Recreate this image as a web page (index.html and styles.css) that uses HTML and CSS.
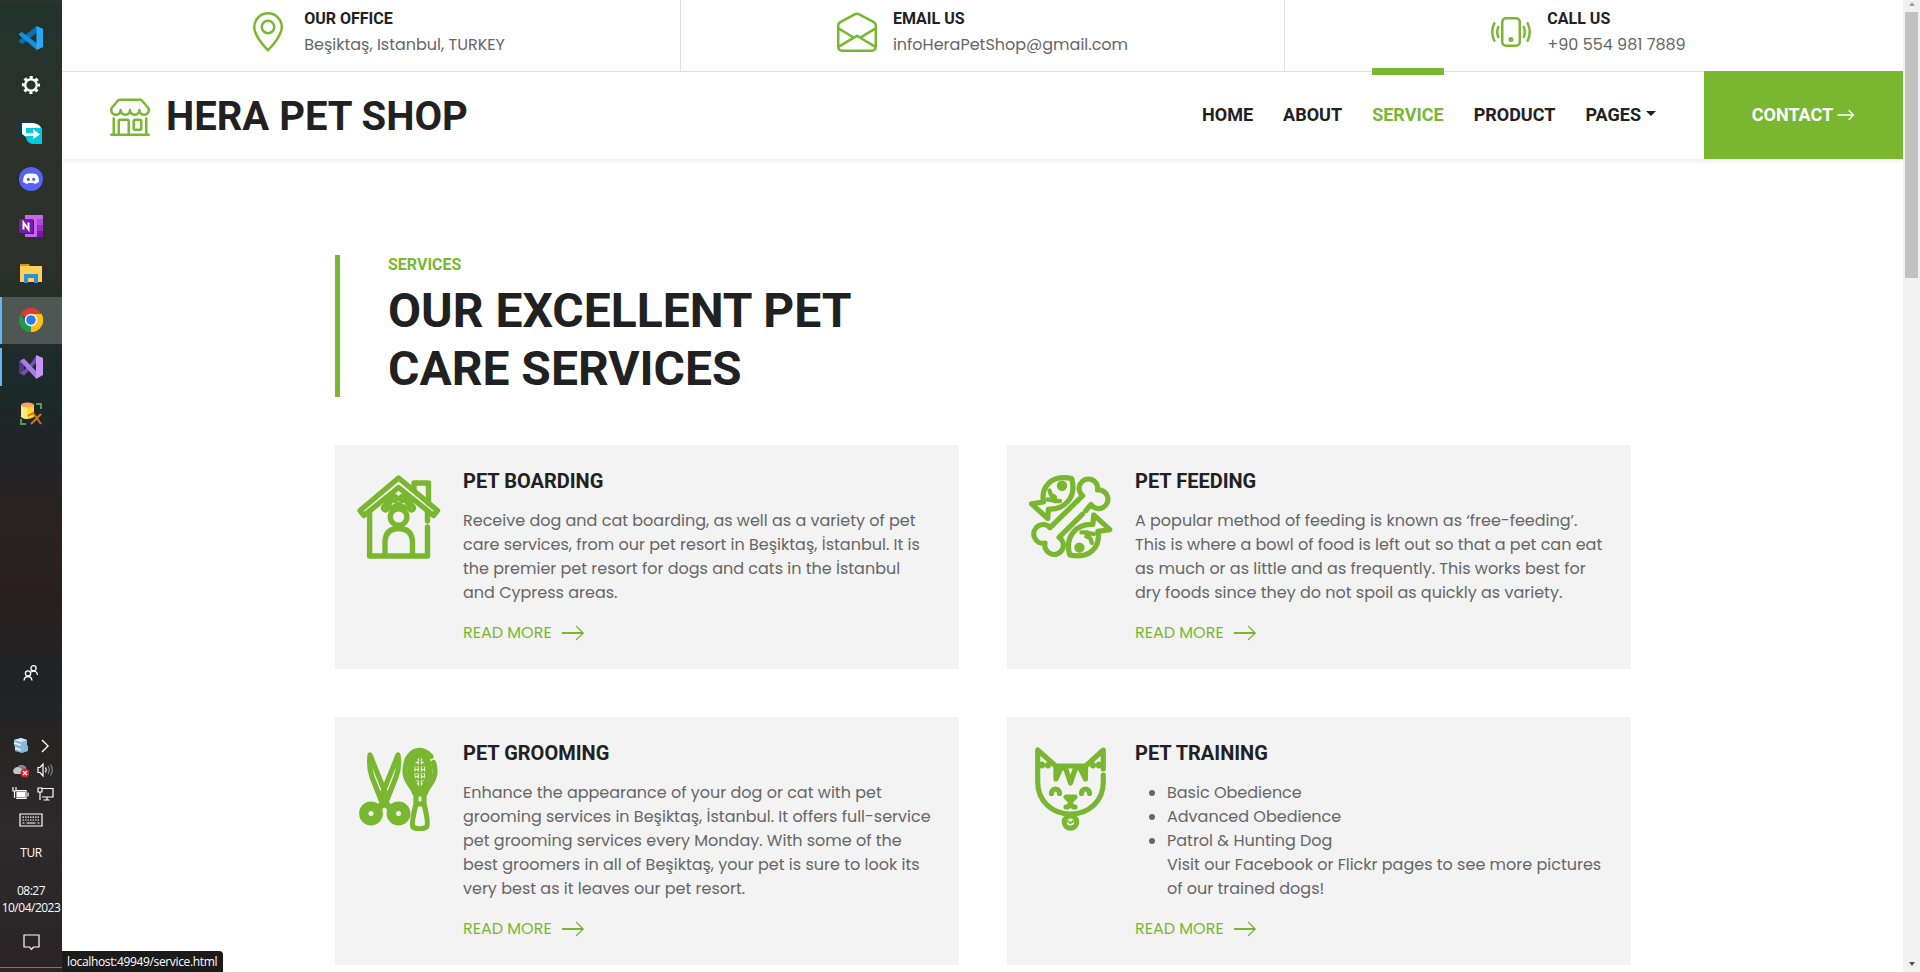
FILE: index.html
```html
<!DOCTYPE html>
<html lang="en">
<head>
<meta charset="utf-8">
<title>Hera Pet Shop</title>
<link rel="stylesheet" href="styles.css">
</head>
<body>
<div class="screen">
  <aside class="taskbar">
    <div class="apps">
      <div class="app"><svg width="24" height="24" viewBox="0 0 24 24"><path d="M17.500 0 24 3V21L17.500 24 18 6.500 3.500 18 0 16V14.500Z" fill="#0a6fb8"/><path d="M0 9V7.500L3 6 18 17.500V24Z" fill="#1490df"/><path d="M17.500 0 24 3V21L17.500 24Z" fill="#29a8f5"/></svg></div>
      <div class="app"><svg width="20" height="20" viewBox="0 0 20 20" fill="none" stroke="#fff"><circle cx="10" cy="10" r="5.800" stroke-width="2.400"/><circle cx="10" cy="10" r="7.700" stroke-width="2.800" stroke-dasharray="3.020 3.020" stroke-dashoffset="1.500"/></svg></div>
      <div class="app"><svg width="24" height="24" viewBox="0 0 24 24"><path d="M1 1H13L15 4H4V16L1 14Z" fill="#003f6b"/><path d="M7 8H23V24H13C9 23 7 20 7 17Z" fill="#00c8df"/><path d="M3 3H14Q21 4 22 8H7V17L3 14Z" fill="#fff"/><path d="M7 13H14V9L21 14.500 14 19V16H7Z" fill="#fff"/></svg></div>
      <div class="app"><svg width="24" height="24" viewBox="0 0 24 24"><circle cx="12" cy="12" r="12" fill="#5562f3"/><path d="M4 15Q4 9 7 7L10 6.500H14L17 7Q20 9 20 15L16 17 14.500 16H9.500L8 17Z" fill="#fff"/><circle cx="9.300" cy="12.300" r="1.600" fill="#5562f3"/><circle cx="14.700" cy="12.300" r="1.600" fill="#5562f3"/></svg></div>
      <div class="app"><svg width="24" height="24" viewBox="0 0 24 24"><path d="M6 1H24V23H6Z" fill="#ca64ea"/><path d="M18 5H24V11H18Z" fill="#ae4bd5"/><path d="M18 11H24V17H18Z" fill="#9332bf"/><path d="M18 17H24V23H18Z" fill="#7719aa"/><path d="M6 6H15V20H6Z" fill="#4e1670"/><path d="M0 5H14V19H0Z" fill="#7719aa"/><path d="M4.500 15.500V8.500L9.500 15.500V8.500" fill="none" stroke="#fff" stroke-width="2"/></svg></div>
      <div class="app"><svg width="24" height="24" viewBox="0 0 24 24"><path d="M1 3H10L11 5H1Z" fill="#e09a00"/><path d="M1 5H23V21H1Z" fill="#ffd05a"/><path d="M5 22V13H19V22H15V17H9V22Z" fill="#2f8fd8"/></svg></div>
      <div class="app active"><svg width="24" height="24" viewBox="0 0 24 24"><path d="M12 12 1.600 6A12 12 0 0 1 22.400 6Z" fill="#e33b2e"/><path d="M12 12 22.400 6A12 12 0 0 1 12 24Z" fill="#fbc116"/><path d="M12 12V24A12 12 0 0 1 1.600 6L7 15Z" fill="#229a4b"/><path d="M12 6H22.400A12 12 0 0 1 12 24L17 15Z" fill="#fbc116"/><circle cx="12" cy="12" r="6.200" fill="#fff"/><circle cx="12" cy="12" r="4.800" fill="#2f7bea"/></svg></div>
      <div class="app open"><svg width="24" height="24" viewBox="0 0 24 24"><path d="M0 6 5 3.500 5 20.500 0 18Z" fill="#53358a"/><path d="M18 0V7L5 20.500 1 18 9 12 17 1Z" fill="#7350b0"/><path d="M5 3.500 1 6 17 23.500V16Z" fill="#a67de0"/><path d="M17 0 24 3V20L17 24Z" fill="#c794f8"/></svg></div>
      <div class="app"><svg width="24" height="24" viewBox="0 0 24 24"><path d="M2 3V15Q8 19 15 15V3Z" fill="#ffd92e"/><path d="M2 3V15Q5 17 8 17V3Z" fill="#ffe97a"/><ellipse cx="8.500" cy="3" rx="6.500" ry="2.500" fill="#f0a95a"/><path d="M17 2H22V7M2 17V22H7" fill="none" stroke="#4aa148" stroke-width="2"/><path d="M12 22 22 12M9 14 14 11 22 22" fill="none" stroke="#e57200" stroke-width="2"/></svg></div>
    </div>
    <div class="tray">
      <svg class="people" width="16" height="16" viewBox="0 0 16 16" fill="none" stroke="#fff" stroke-width="1.300"><circle cx="5" cy="8.500" r="2.600"/><path d="M1 15.500Q1.500 11.500 5 11.500T9 15.500"/><circle cx="10.500" cy="3.300" r="2.600"/><path d="M8 7Q14 4.500 14.500 10"/></svg>
      <div class="tray-row"><svg width="16" height="16" viewBox="0 0 16 16"><path d="M1 2 8 0 14 2V7L15 8V13L9 15 2 13V9L1 7Z" fill="#86b9d9"/><path d="M1 2 8 0 14 2 8 4Z" fill="#d4e8f3"/><path d="M1 5 8 7M2 10 8 12" stroke="#e6f4fb" stroke-width="1.500"/></svg><svg width="16" height="16" viewBox="0 0 16 16" fill="none" stroke="#fff" stroke-width="1.400"><path d="M5 2 11 8 5 14"/></svg></div>
      <div class="tray-row"><svg width="16" height="16" viewBox="0 0 16 16"><path d="M0 9Q1 5 5 5 7 1 13 5L12 12H2Q0 11 0 9Z" fill="#c4c4c4"/><path d="M5 5Q7 1 13 5L11 8Z" fill="#858585"/><circle cx="12" cy="11" r="4.500" fill="#d9202c"/><path d="M10 9 14 13M14 9 10 13" stroke="#fff" stroke-width="1.200"/></svg><svg width="17" height="16" viewBox="0 0 17 16" fill="none" stroke="#fff" stroke-width="1.200"><path d="M1 5.500H3L6 2V14L3 10.500H1ZM8.500 5.500Q10 8 8.500 10.500"/><path d="M11 4Q13.500 8 11 12M13.500 2.500Q17 8 13.500 13.500" stroke="#888"/></svg></div>
      <div class="tray-row"><svg width="17" height="16" viewBox="0 0 17 16" fill="none" stroke="#fff" stroke-width="1.200"><path d="M1 1V5H4V1M2.500 5V12M4 4.500H14V12.500H4M16 6.500V10.500"/><path d="M5 6H12.500V11H5Z" fill="#fff"/></svg><svg width="17" height="16" viewBox="0 0 17 16" fill="none" stroke="#fff" stroke-width="1.200"><path d="M5 2.500H16V11H5M1 2H5V6H1ZM3 6V14M10 11V14M6.500 14H12.500"/></svg></div>
      <svg class="keyboard" width="24" height="14" viewBox="0 0 24 14" fill="none" stroke="#fff" stroke-width="1.200"><path d="M1 1H23V13H1Z"/><path d="M3.500 4.200H21M3.500 7H21" stroke-dasharray="1.500 1"/><path d="M3.500 10H5.500M7.500 10H16.500M18.500 10H20.500"/></svg>
      <div class="lang">TUR</div>
      <div class="clock">08:27<br>10/04/2023</div>
      <svg class="notify" width="17" height="17" viewBox="0 0 17 17" fill="none" stroke="#fff" stroke-width="1.200"><path d="M1 1H16V13H10.500L8.500 15.300 6.500 13H1Z"/></svg>
    </div>
  </aside>

  <div class="page">
    <div class="topbar">
      <div class="contact-cell office">
        <svg class="c-icon" width="40" height="40" viewBox="0 0 16 16" fill="#7ab730"><path d="M12.166 8.940c-.524 1.062-1.234 2.120-1.960 3.070A31.493 31.493 0 0 1 8 14.580a31.481 31.481 0 0 1-2.206-2.570c-.726-.950-1.436-2.008-1.960-3.070C3.304 7.867 3 6.862 3 6a5 5 0 0 1 10 0c0 .862-.305 1.867-.834 2.940zM8 16s6-5.686 6-10A6 6 0 0 0 2 6c0 4.314 6 10 6 10z"/><path d="M8 8a2 2 0 1 1 0-4 2 2 0 0 1 0 4zm0 1a3 3 0 1 0 0-6 3 3 0 0 0 0 6z"/></svg>
        <div><h6>OUR OFFICE</h6><span class="info">Beşiktaş, Istanbul, TURKEY</span></div>
      </div>
      <div class="contact-cell">
        <svg class="c-icon" width="40" height="40" viewBox="0 0 16 16" fill="#7ab730"><path d="M8.470 1.318a1 1 0 0 0-.940 0l-6 3.200A1 1 0 0 0 1 5.400v.817l5.750 3.450L8 8.917l1.250.750L15 6.217V5.400a1 1 0 0 0-.530-.882l-6-3.200ZM15 7.383l-4.778 2.867L15 13.117V7.383Zm-.035 6.880L8 10.082l-6.965 4.180A1 1 0 0 0 2 15h12a1 1 0 0 0 .965-.738ZM1 13.116l4.778-2.867L1 7.383v5.734ZM7.059.435a2 2 0 0 1 1.882 0l6 3.200A2 2 0 0 1 16 5.400V14a2 2 0 0 1-2 2H2a2 2 0 0 1-2-2V5.400a2 2 0 0 1 1.059-1.765l6-3.200Z"/></svg>
        <div><h6>EMAIL US</h6><span class="info">infoHeraPetShop@gmail.com</span></div>
      </div>
      <div class="contact-cell phone">
        <svg class="c-icon" width="40" height="40" viewBox="0 0 16 16" fill="#7ab730"><path d="M10 3a1 1 0 0 1 1 1v8a1 1 0 0 1-1 1H6a1 1 0 0 1-1-1V4a1 1 0 0 1 1-1h4zM6 2a2 2 0 0 0-2 2v8a2 2 0 0 0 2 2h4a2 2 0 0 0 2-2V4a2 2 0 0 0-2-2H6z"/><path d="M8 12a1 1 0 1 0 0-2 1 1 0 0 0 0 2zM1.599 4.058a.5.5 0 0 1 .208.676A6.967 6.967 0 0 0 1 8c0 1.180.292 2.290.807 3.266a.5.5 0 0 1-.884.468A7.968 7.968 0 0 1 0 8c0-1.347.334-2.619.923-3.734a.5.5 0 0 1 .676-.208zm12.802 0a.5.5 0 0 1 .676.208A7.967 7.967 0 0 1 16 8a7.967 7.967 0 0 1-.923 3.734.5.5 0 0 1-.884-.468A6.967 6.967 0 0 0 15 8c0-1.180-.292-2.290-.807-3.266a.5.5 0 0 1 .208-.676zM3.057 5.534a.5.5 0 0 1 .284.648A4.986 4.986 0 0 0 3 8c0 .642.120 1.255.340 1.818a.5.5 0 1 1-.930.364A5.986 5.986 0 0 1 2 8c0-.769.145-1.505.410-2.182a.5.5 0 0 1 .647-.284zm9.886 0a.5.5 0 0 1 .648.284C13.855 6.495 14 7.231 14 8c0 .769-.145 1.505-.410 2.182a.5.5 0 0 1-.930-.364C12.880 9.255 13 8.642 13 8c0-.642-.120-1.255-.340-1.818a.5.5 0 0 1 .283-.648z"/></svg>
        <div><h6>CALL US</h6><span class="info">+90 554 981 7889</span></div>
      </div>
    </div>

    <nav class="navbar">
      <div class="brand">
        <svg width="40" height="40" viewBox="0 0 16 16" fill="#7ab730"><path d="M2.970 1.350A1 1 0 0 1 3.730 1h8.540a1 1 0 0 1 .760.350l2.609 3.044A1.500 1.500 0 0 1 16 5.370v.255a2.375 2.375 0 0 1-4.250 1.458A2.371 2.371 0 0 1 9.875 8 2.370 2.370 0 0 1 8 7.083 2.370 2.370 0 0 1 6.125 8a2.370 2.370 0 0 1-1.875-.917A2.375 2.375 0 0 1 0 5.625V5.370a1.500 1.500 0 0 1 .361-.976l2.610-3.045zm1.780 4.275a1.375 1.375 0 0 0 2.750 0 .5.5 0 0 1 1 0 1.375 1.375 0 0 0 2.750 0 .5.5 0 0 1 1 0 1.375 1.375 0 1 0 2.750 0V5.370a.5.5 0 0 0-.120-.325L12.270 2H3.730L1.120 5.045A.5.5 0 0 0 1 5.370v.255a1.375 1.375 0 0 0 2.750 0 .5.5 0 0 1 1 0zM1.500 8.500A.5.5 0 0 1 2 9v6h1v-5a1 1 0 0 1 1-1h3a1 1 0 0 1 1 1v5h6V9a.5.5 0 0 1 1 0v6h.5a.5.5 0 0 1 0 1H.5a.5.5 0 0 1 0-1H1V9a.5.5 0 0 1 .5-.5zM4 15h3v-5H4v5zm5-5a1 1 0 0 1 1-1h2a1 1 0 0 1 1 1v3a1 1 0 0 1-1 1h-2a1 1 0 0 1-1-1v-3zm3 0h-2v3h2v-3z"/></svg>
        <span class="brand-name">HERA PET SHOP</span>
      </div>
      <div class="links">
        <a>HOME</a><a>ABOUT</a><a class="current">SERVICE</a><a>PRODUCT</a><a class="pages">PAGES<i class="caret"></i></a>
      </div>
      <a class="cta">CONTACT<svg width="18" height="18" viewBox="0 0 18 18" fill="none" stroke="#fff" stroke-width="1.300" stroke-linecap="round" stroke-linejoin="round"><path d="M1 9H16.500M12 4.500 16.500 9 12 13.500"/></svg></a>
    </nav>

    <main class="content">
      <header class="heading">
        <h6>SERVICES</h6>
        <h1>OUR EXCELLENT PET<br>CARE SERVICES</h1>
      </header>
      <div class="cards">
        <article class="card">
          <svg class="pic" width="84" height="84" viewBox="0 0 84 84" fill="none" stroke="#7ab730" stroke-width="5.400" stroke-linecap="round" stroke-linejoin="round"><path d="M41.600 3 3 35.500 7 40.500 41.600 12.500 76.500 40.500 80.500 35.500Z"/><path d="M57 15V8H71.500V28M12.600 37V81H70.500V52M70.500 46V37"/><path d="M28 80V66Q29 53.500 41.700 53.500T55.500 66V80"/><circle cx="41.600" cy="42" r="8.300"/><g stroke-width="4.400"><circle cx="28.500" cy="33" r="2.500"/><circle cx="54.500" cy="33" r="2.500"/><circle cx="31" cy="27" r="2.500"/><circle cx="37.500" cy="23.500" r="2.500"/><circle cx="45.500" cy="23.500" r="2.500"/><circle cx="52" cy="27" r="2.500"/><path d="M34 33 41.500 29 49 33"/></g></svg>
          <div class="card-body">
            <h5>PET BOARDING</h5>
            <p>Receive dog and cat boarding, as well as a variety of pet<br>care services, from our pet resort in Beşiktaş, İstanbul. It is<br>the premier pet resort for dogs and cats in the İstanbul<br>and Cypress areas.</p>
            <a class="more">READ MORE<svg width="24" height="16" viewBox="0 0 24 16" fill="none" stroke="#7ab730"><path d="M1 8H22" stroke-width="2"/><path d="M15 1 22.300 8 15 15" stroke-width="1.200"/></svg></a>
          </div>
        </article>
        <article class="card">
          <svg class="pic" width="84" height="84" viewBox="0 0 84 84" fill="none" stroke="#7ab730" stroke-width="5.200" stroke-linecap="round" stroke-linejoin="round"><path d="M53.300 39.300 30 62.300A9.300 9.300 0 1 1 16 68 9.300 9.300 0 1 1 21 52.700L53.700 20.700A9.300 9.300 0 1 1 68.500 15 9.300 9.300 0 1 1 62 29.500L56.700 35.700"/><g id="fish"><path d="M42.700 3.500C21 -1 12 13 14.500 27L2.500 28.800 18.700 43.500 19.500 34C35 35 48 23 42.700 3.500Z"/><circle cx="33" cy="10.800" r="2.600"/><path d="M20.500 15.500 22 20 26 22M18.500 24.500 23 25M26 22 25 26 31 26" stroke-width="4.300"/></g><use href="#fish" transform="rotate(180 41.700 41.700)"/></svg>
          <div class="card-body">
            <h5>PET FEEDING</h5>
            <p>A popular method of feeding is known as ‘free-feeding’.<br>This is where a bowl of food is left out so that a pet can eat<br>as much or as little and as frequently. This works best for<br>dry foods since they do not spoil as quickly as variety.</p>
            <a class="more">READ MORE<svg width="24" height="16" viewBox="0 0 24 16" fill="none" stroke="#7ab730"><path d="M1 8H22" stroke-width="2"/><path d="M15 1 22.300 8 15 15" stroke-width="1.200"/></svg></a>
          </div>
        </article>
        <article class="card">
          <svg class="pic" width="84" height="84" viewBox="0 0 84 84" fill="none" stroke="#7ab730" stroke-width="5.200" stroke-linecap="round" stroke-linejoin="round"><path d="M13 8Q11.500 20 15 30L26 58 30 50ZM41 8Q43 20 39 30L28 58 24 50Z"/><circle cx="14" cy="66.500" r="7.200" stroke-width="9.400"/><circle cx="41.500" cy="66.500" r="7.200" stroke-width="9.400"/><path d="M22 61 27.500 55 33 61" stroke-width="6.500"/><path d="M74 9.500C62 -4 48 6 48 25 48 35 56 39 57.500 46H68.500C70 39 78 35 78 25Q78 19 76.500 15.500"/><ellipse cx="62.800" cy="25" rx="9" ry="18" stroke-width="7"/><g stroke-width="2"><path d="M62.800 11V40M57 18.500H69M57 25.500H69M57 32.500H69"/><path d="M59.500 10V40M66 10V40" stroke-width="2.600" stroke-dasharray="0.100 3.500"/></g><path d="M59 47H67V57H59ZM59 57Q54 77 56 80 62 84 69.500 80 72 77 67 57Z"/></svg>
          <div class="card-body">
            <h5>PET GROOMING</h5>
            <p>Enhance the appearance of your dog or cat with pet<br>grooming services in Beşiktaş, İstanbul. It offers full-service<br>pet grooming services every Monday. With some of the<br>best groomers in all of Beşiktaş, your pet is sure to look its<br>very best as it leaves our pet resort.</p>
            <a class="more">READ MORE<svg width="24" height="16" viewBox="0 0 24 16" fill="none" stroke="#7ab730"><path d="M1 8H22" stroke-width="2"/><path d="M15 1 22.300 8 15 15" stroke-width="1.200"/></svg></a>
          </div>
        </article>
        <article class="card">
          <svg class="pic" width="84" height="84" viewBox="0 0 84 84" fill="none" stroke="#7ab730" stroke-width="5.200" stroke-linecap="round" stroke-linejoin="round"><path d="M74.300 22V3L56.700 19H26.700L8.700 3V35C8.700 54 23 67 41.500 67S74.300 54 74.300 35V28"/><path d="M27 20V32L32 21 36.500 21 41.500 36 46.500 21 51 21 56.500 32V20"/><path d="M22.500 46.500A4 4.500 0 0 1 30.500 46.500M52.500 46.500A4 4.500 0 0 1 60.500 46.500M37 50H46L41.500 54.500ZM41.500 55V57.500M37 60H38.500L41.500 57.500 44.500 60H46"/><circle cx="41.500" cy="75" r="6.200"/><path d="M39 74Q41.500 78 44 74" stroke-width="2"/><path d="M13 17.500V18.500M19 18V18.500M64 18V18.500M70 17.500V18.500" stroke-width="6"/></svg>
          <div class="card-body">
            <h5>PET TRAINING</h5>
            <ul><li>Basic Obedience</li><li>Advanced Obedience</li><li>Patrol &amp; Hunting Dog<br>Visit our Facebook or Flickr pages to see more pictures<br>of our trained dogs!</li></ul>
            <a class="more">READ MORE<svg width="24" height="16" viewBox="0 0 24 16" fill="none" stroke="#7ab730"><path d="M1 8H22" stroke-width="2"/><path d="M15 1 22.300 8 15 15" stroke-width="1.200"/></svg></a>
          </div>
        </article>
      </div>
    </main>
    <div class="status">localhost:49949/service.html</div>
  </div>

  <div class="scrollbar"><i class="up"></i><div class="thumb"></div><i class="down"></i></div>
</div>
</body>
</html>
```
FILE: styles.css
```css
* { box-sizing: border-box; }

body {
  margin: 0;
  overflow: hidden;
  font-family: Poppins, Inter, "Open Sans", sans-serif;
  font-size: 16px;
  line-height: 24px;
  color: #666;
  background: #fff;
}

h1, h5, h6, p, ul { margin: 0; }

h1, h5, h6 {
  font-family: Roboto, sans-serif;
  font-weight: 700;
  color: #212121;
  white-space: nowrap;
}

svg { display: block; flex: none; }

.screen {
  display: grid;
  grid-template-columns: 62px 1841px 17px;
  height: 972px;
}

/* taskbar */
.taskbar {
  display: flex;
  flex-direction: column;
  justify-content: space-between;
  background: linear-gradient(#2b372f 0, #22322d 8px, #2b322b 110px, #2b302a 260px, #1c2a2a 380px, #202527 440px, #2b2222 520px, #291f20 600px, #1e2425 690px, #282424 740px, #2d2a2c 830px, #2a2426 960px);
}

.apps { display: flex; flex-direction: column; padding-top: 15px; }

.app {
  display: flex;
  align-items: center;
  justify-content: center;
  height: 47px;
  padding-bottom: 1px;
}

.active { background: linear-gradient(90deg, #6ab5f1 2px, #4f5754 2px); }
.open { background: linear-gradient(#6ab5f1, #6ab5f1) 0 4px / 2px 38px no-repeat; }

.tray {
  display: flex;
  flex-direction: column;
  align-items: center;
  height: 303px;
  color: #fff;
  font: 12px/17px "Open Sans", sans-serif;
  border-bottom: 1px solid #777;
  margin-bottom: 4px;
}

.tray-row { display: flex; gap: 8px; height: 24px; margin-left: 4px; align-items: center; }
.people { margin-bottom: 53px; }
.keyboard { margin-top: 7px; }
.lang { margin-top: 17px; letter-spacing: -0.5px; }
.clock { margin-top: 21px; text-align: center; letter-spacing: -0.5px; }
.notify { margin-top: 18px; }

/* web page */
.page { position: relative; height: 972px; overflow: hidden; }

.topbar {
  display: grid;
  grid-template-columns: 618px 604px 1fr;
  height: 72px;
  border-bottom: 1px solid #dee2e6;
}

.contact-cell {
  display: flex;
  justify-content: center;
  padding-top: 9px;
  gap: 16px;
}

.contact-cell + .contact-cell { border-left: 1px solid #dee2e6; }
.contact-cell h6 { font-size: 16px; line-height: 19px; margin-bottom: 5px; }
.c-icon { margin-top: 3px; }
.info { white-space: nowrap; }
.office { padding-left: 11px; }
.phone { padding-right: 11px; }

.navbar {
  display: flex;
  align-items: center;
  height: 87px;
  padding-left: 48px;
  box-shadow: 0 2px 4px rgba(0, 0, 0, 0.075);
}

.brand { display: flex; align-items: center; gap: 16px; flex: 1; }

.brand-name {
  font: 700 40px/48px Roboto, sans-serif;
  color: #212121;
  padding-top: 2px;
}

.links {
  display: flex;
  gap: 30px;
  margin-right: 48px;
  padding-bottom: 2px;
  font: 700 18px/24px Roboto, sans-serif;
  color: #212121;
}

.links a { position: relative; }
.current { color: #7ab730; }

.current::before {
  content: "";
  position: absolute;
  left: 0;
  right: 0;
  top: -35px;
  height: 7px;
  background: #7ab730;
}

.pages { display: flex; gap: 5px; }

.caret {
  margin-top: 8px;
  width: 0;
  height: 0;
  border: 5px solid transparent;
  border-top-color: #212121;
  border-bottom: 0;
}

.cta {
  display: flex;
  align-items: center;
  justify-content: center;
  gap: 4px;
  width: 199px;
  height: 88px;
  margin-top: -1px;
  padding-bottom: 1px;
  font: 700 18px/24px Roboto, sans-serif;
  color: #fff;
  background: #7ab730;
}

.content { padding: 96px 272px 0 273px; }

.heading {
  border-left: 5px solid #7ab730;
  padding-left: 48px;
  height: 142px;
  margin-bottom: 48px;
}

.heading h6 { color: #7ab730; font-size: 16px; line-height: 19px; margin-bottom: 8px; }
.heading h1 { font-size: 48px; line-height: 57.6px; }

.cards { display: grid; grid-template-columns: 624px 624px; gap: 48px; }

.card {
  display: flex;
  gap: 22px;
  padding: 24px 22px;
  background: #f3f3f3;
}

.pic { margin-top: 6px; }
.card-body { white-space: nowrap; }
.card-body h5 { font-size: 20px; line-height: 24px; margin-bottom: 16px; }
.card-body p, .card-body ul { margin-bottom: 16px; }
.card-body ul { padding-left: 32px; }
.more { display: flex; align-items: center; gap: 9px; color: #7ab730; }

.status {
  position: absolute;
  left: 0;
  bottom: 0;
  height: 21px;
  padding: 0 6px 0 5px;
  font: 12px/21px "Open Sans", sans-serif;
  letter-spacing: -0.35px;
  color: #fff;
  background: #1b1b1b;
  border-top-right-radius: 4px;
}

.scrollbar {
  display: flex;
  flex-direction: column;
  align-items: center;
  background: #f1f1f1;
}

.up, .down { border: 3px solid transparent; }
.up { border-top: 0; border-bottom: 4px solid #a0a0a0; margin: 2px 0 6px; }
.down { border-bottom: 0; border-top: 4px solid #505050; margin: auto 0 6px; }
.thumb { width: 13px; height: 266px; background: #c1c1c1; }
```
